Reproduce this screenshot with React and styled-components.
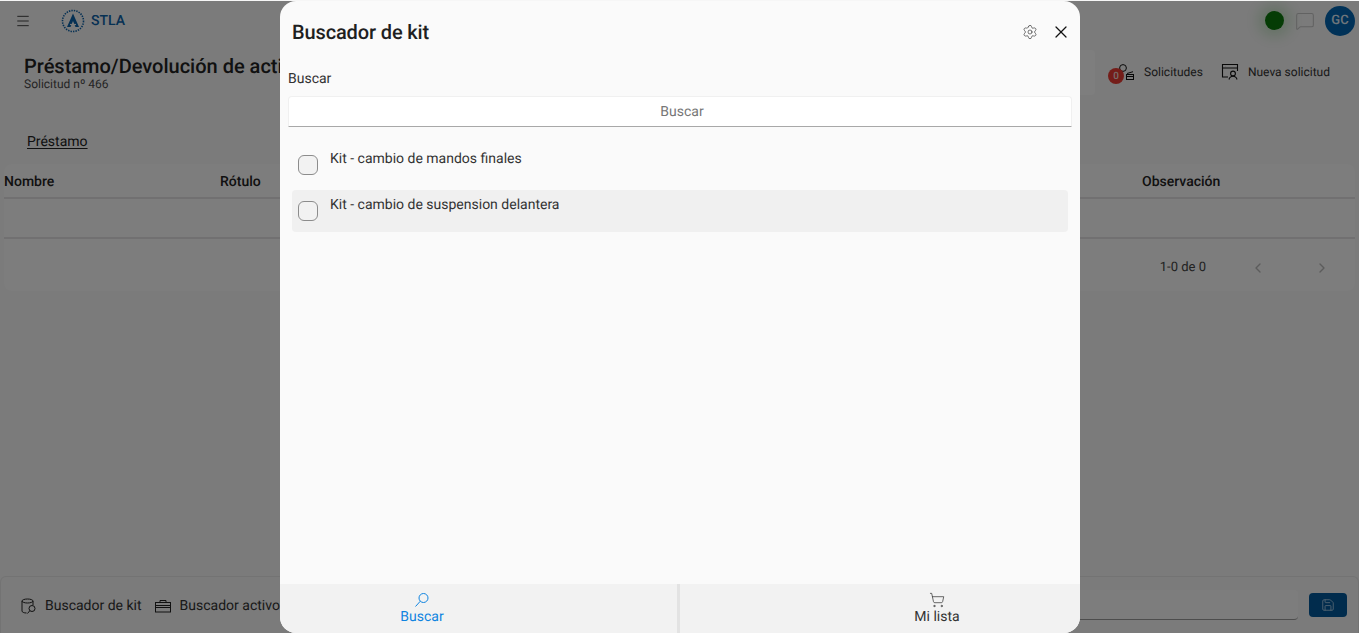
import React from "react";
import styled, { createGlobalStyle } from "styled-components";
import { Settings, X, Menu, ChevronLeft, ChevronRight, ShoppingCart, Save, MessageSquare } from "lucide-react";

const Global = createGlobalStyle`
  html, body { margin: 0; padding: 0; height: 100%; overflow: hidden; }
  body { font-family: Roboto, "Liberation Sans", sans-serif; background: #f6f6f6; color: #222; text-rendering: geometricPrecision; }
  * { box-sizing: border-box; }
`;

const Page = styled.div`
  position: relative;
  width: 1359px;
  height: 633px;
  overflow: hidden;
  display: flex;
  flex-direction: column;
  background: #f6f6f6;
`;

const TopBar = styled.header`
  height: 43px;
  display: flex;
  align-items: center;
  padding: 0 4px 2px 15px;
  flex-shrink: 0;
`;

const Brand = styled.div`
  display: flex;
  align-items: center;
  gap: 6px;
  margin-left: 30px;
  color: #0d62a8;
  font-size: 14px;
  font-weight: 500;
  svg { display: block; }
`;

const TopRight = styled.div`
  margin-left: auto;
  display: flex;
  align-items: center;
  gap: 10px;
`;

const StatusDot = styled.span`
  width: 19px;
  height: 19px;
  margin-right: 1px;
  border-radius: 50%;
  background: #0b780b;
  box-shadow: 0 0 14px 6px rgba(14, 154, 14, 0.2);
`;

const Avatar = styled.span`
  width: 30px;
  height: 30px;
  border-radius: 50%;
  background: #0264b0;
  color: #dfeaf5;
  display: flex;
  align-items: center;
  justify-content: center;
  font-size: 13px;
  font-weight: 500;
`;

const TitleRow = styled.div`
  height: 55px;
  display: flex;
  align-items: flex-start;
  padding: 11px 29px 0 24px;
  flex-shrink: 0;
`;

const TitleBlock = styled.div`
  display: flex;
  flex-direction: column;
  white-space: nowrap;
`;

const PageTitle = styled.h1`
  margin: 0;
  font-size: 20px;
  line-height: 24px;
  font-weight: 500;
  color: #222;
`;

const PageSub = styled.span`
  font-size: 12px;
  line-height: 12px;
  color: #4a4a4a;
`;

const Actions = styled.div`
  margin-left: auto;
  display: flex;
  align-items: center;
  height: 36px;
`;

const ActionItem = styled.div`
  position: relative;
  display: flex;
  align-items: center;
  gap: ${(p) => p.$gap || 10}px;
  font-size: 12px;
  color: #333;
  margin-left: ${(p) => p.$left || 0}px;
`;

const Badge = styled.span`
  position: absolute;
  left: -9px;
  top: 5px;
  width: 16px;
  height: 16px;
  border-radius: 50%;
  background: #e83b32;
  color: #f0d8d6;
  font-size: 10px;
  font-weight: 500;
  display: flex;
  align-items: center;
  justify-content: center;
`;

const Tabs = styled.div`
  height: 66px;
  flex-shrink: 0;
  padding: 33px 0 0 27px;
`;

const TabLabel = styled.span`
  font-size: 14px;
  line-height: 20px;
  color: #222;
  text-decoration: underline;
  text-underline-offset: 2px;
`;

const TableCard = styled.section`
  margin: 0 4px 0 4px;
  background: #fafafa;
  border-radius: 8px;
  height: 127px;
  display: flex;
  flex-direction: column;
`;

const TableHead = styled.div`
  height: 35px;
  padding-top: 2px;
  display: grid;
  grid-template-columns: 216px 922px 1fr;
  align-items: center;
  font-size: 14px;
  font-weight: 500;
  color: #222;
  border-bottom: 2px solid #e2e0e2;
`;

const TableEmpty = styled.div`
  height: 40px;
  border-bottom: 2px solid #e2e0e2;
`;

const Pager = styled.div`
  flex: 1;
  display: flex;
  align-items: center;
  justify-content: flex-end;
  font-size: 13px;
  color: #444;
  padding: 5px 25px 0 0;
  svg { color: #b9b9b9; }
`;

const PagerCount = styled.span`
  margin-right: 44px;
`;

const PagerGap = styled.span`
  width: 48px;
`;

const Spacer = styled.div`
  flex: 1;
`;

const BottomBar = styled.footer`
  height: 57px;
  flex-shrink: 0;
  border: 1px solid #e6e6e6;
  border-bottom: 0;
  border-radius: 6px 6px 0 0;
  background: #f6f6f6;
  display: flex;
  align-items: center;
  padding: 0 11px 0 20px;
  font-size: 14px;
  color: #333;
`;

const BottomItem = styled.div`
  display: flex;
  align-items: center;
  gap: ${(p) => p.$gap || 8}px;
  margin-right: 12px;
  padding-top: 2px;
  white-space: nowrap;
`;

const NoteField = styled.div`
  margin-left: auto;
  width: 300px;
  height: 30px;
  background: #fbfbfb;
  border-bottom: 1px solid #9a9a9a;
  border-radius: 4px;
`;

const SaveButton = styled.button`
  width: 38px;
  height: 24px;
  margin-left: 11px;
  border: 0;
  border-radius: 4px;
  background: #02589a;
  color: #a9cbe6;
  display: flex;
  align-items: center;
  justify-content: center;
  padding: 0;
`;

const SearchGhost = styled.div`
  position: absolute;
  left: 1060px;
  top: 50px;
  width: 35px;
  height: 45px;
  background: #fdfdfd;
  border-radius: 4px;
`;

const Backdrop = styled.div`
  position: absolute;
  inset: 1px 0 0 0;
  background: rgba(0, 0, 0, 0.5);
`;

const Modal = styled.div`
  position: absolute;
  left: 280px;
  top: 1px;
  width: 800px;
  height: 632px;
  background: #fafafa;
  border-radius: 16px;
  overflow: hidden;
  display: flex;
  flex-direction: column;
`;

const ModalHeader = styled.div`
  height: 61px;
  flex-shrink: 0;
  display: flex;
  align-items: center;
  padding: 0 9px 0 12px;
`;

const ModalTitle = styled.h2`
  margin: 0;
  font-size: 20px;
  font-weight: 500;
  letter-spacing: -0.13px;
  color: #1f1f1f;
`;

const HeaderIcons = styled.div`
  margin-left: auto;
  display: flex;
  align-items: center;
  gap: 13px;
  svg { display: block; }
`;

const ModalBody = styled.div`
  flex: 1;
  padding: 9px 8px 0 8px;
  display: flex;
  flex-direction: column;
`;

const FieldLabel = styled.label`
  font-size: 14px;
  line-height: 16px;
  color: #333;
`;

const SearchInput = styled.input`
  width: 784px;
  height: 31px;
  margin-top: 9px;
  padding: 0 0 0 4px;
  border: 1px solid #f0f0f0;
  border-bottom: 1px solid #a8a8a8;
  border-radius: 4px 4px 0 0;
  background: #fff;
  font: 400 14px Roboto, sans-serif;
  text-rendering: geometricPrecision;
  text-align: center;
  outline: 0;
  &::placeholder { color: #777; opacity: 1; }
`;

const KitList = styled.div`
  margin: 17px 4px 0 4px;
  display: flex;
  flex-direction: column;
  gap: 4px;
`;

const KitRow = styled.div`
  height: 42px;
  display: flex;
  align-items: flex-start;
  gap: 12px;
  padding: 0 6px;
  border-radius: 4px;
  background: ${(p) => (p.$shade ? "#f0f0f0" : "transparent")};
`;

const KitCheck = styled.span`
  width: 20px;
  height: 20px;
  margin-top: 11px;
  border: 1px solid #8c8c8c;
  border-radius: 6px;
  background: #f2f2f2;
  flex-shrink: 0;
`;

const KitText = styled.span`
  font-size: 14px;
  line-height: 20px;
  margin-top: 5px;
  color: #333;
`;

const ModalTabs = styled.div`
  height: 49px;
  flex-shrink: 0;
  display: grid;
  grid-template-columns: 397px 3px 1fr;
  background: #f2f2f2;
`;

const ModalTab = styled.button`
  border: 0;
  background: transparent;
  padding: 8px ${(p) => (p.$active ? "113px" : "0")} 0 ${(p) => (p.$active ? "0" : "114px")};
  display: flex;
  flex-direction: column;
  align-items: center;
  font: 400 14px/16px Roboto, sans-serif;
  text-rendering: geometricPrecision;
  color: ${(p) => (p.$active ? "#0f84e0" : "#333")};
  svg { display: block; margin-bottom: 1px; }
`;

const TabDivider = styled.span`
  background: #e3e3e3;
`;

const Logo = () => (
  <svg width="24" height="24" viewBox="0 0 24 24" fill="none">
    <circle cx="12" cy="12" r="10.5" stroke="#0d62a8" strokeWidth="1.6" strokeDasharray="1.4 1.1" />
    <path d="M12 4.5 L18 18 H14.5 L12 12 L9.5 18 H6 Z" fill="#0d62a8" />
    <path d="M9 15.5 H15" stroke="#f6f6f6" strokeWidth="1.2" />
  </svg>
);

const RequestsIcon = () => (
  <svg width="18" height="18" viewBox="0 0 18 18" fill="none" stroke="#111" strokeWidth="1">
    <circle cx="6" cy="5" r="3.4" />
    <rect x="9.500" y="11.500" width="7" height="5" />
    <path d="M9.500 13.500h7M10 10.500l6-1.800" />
  </svg>
);

const NewRequestIcon = () => (
  <svg width="18" height="18" viewBox="0 0 18 18" fill="none" stroke="#111" strokeWidth="1.1">
    <path d="M7 14H1.500V1.500h15V8" />
    <path d="M1.500 5h15M4 3.200h.1" />
    <circle cx="12" cy="10.500" r="2.400" />
    <path d="M8 16.500c.5-2 2-3.200 4-3.200s3.500 1.200 4 3.200" />
  </svg>
);

const KitIcon = () => (
  <svg width="16" height="17" viewBox="0 0 16 17" fill="none" stroke="#222" strokeWidth="1">
    <ellipse cx="6.500" cy="3" rx="5.500" ry="2" />
    <path d="M1 3v10c0 1.200 2 2 4.500 2M12 3v4" />
    <circle cx="11" cy="10.500" r="3" />
    <path d="M8.800 12.700L6.500 15.500" />
  </svg>
);

const CaseIcon = () => (
  <svg width="18" height="14" viewBox="0 0 18 14" fill="none" stroke="#222" strokeWidth="1">
    <rect x="1.500" y="3.500" width="15" height="9.500" />
    <path d="M6 3.500V1.500h6v2M1.500 6.500h15M1.500 8.500h15" />
  </svg>
);

const FindIcon = () => (
  <svg width="16" height="16" viewBox="0 0 16 16" fill="none" stroke="currentColor" strokeWidth="1">
    <circle cx="9.500" cy="6" r="4.500" />
    <path d="M6.300 9.200L1.500 14.500" />
  </svg>
);

export default function App() {
  return (
    <Page>
      <Global />
      <TopBar>
        <Menu size={16} color="#222" strokeWidth={1.25} />
        <Brand>
          <Logo />
          <span>STLA</span>
        </Brand>
        <TopRight>
          <StatusDot />
          <MessageSquare size={20} color="#c4c4c4" strokeWidth={1.25} />
          <Avatar>GC</Avatar>
        </TopRight>
      </TopBar>
      <TitleRow>
        <TitleBlock>
          <PageTitle>Préstamo/Devolución de activos</PageTitle>
          <PageSub>Solicitud nº 466</PageSub>
        </TitleBlock>
        <Actions>
          <ActionItem $gap={9}>
            <Badge>0</Badge>
            <RequestsIcon />
            <span>Solicitudes</span>
          </ActionItem>
          <ActionItem $left={18} $gap={9}>
            <NewRequestIcon />
            <span>Nueva solicitud</span>
          </ActionItem>
        </Actions>
      </TitleRow>
      <Tabs>
        <TabLabel>Préstamo</TabLabel>
      </Tabs>
      <TableCard>
        <TableHead>
          <span>Nombre</span>
          <span>Rótulo</span>
          <span>Observación</span>
        </TableHead>
        <TableEmpty />
        <Pager>
          <PagerCount>1-0 de 0</PagerCount>
          <ChevronLeft size={16} />
          <PagerGap />
          <ChevronRight size={16} />
        </Pager>
      </TableCard>
      <Spacer />
      <BottomBar>
        <BottomItem>
          <KitIcon />
          <span>Buscador de kit</span>
        </BottomItem>
        <BottomItem $gap={8}>
          <CaseIcon />
          <span>Buscador activos</span>
        </BottomItem>
        <NoteField />
        <SaveButton aria-label="Guardar">
          <Save size={14} strokeWidth={1.5} />
        </SaveButton>
      </BottomBar>
      <SearchGhost />
      <Backdrop />
      <Modal>
        <ModalHeader>
          <ModalTitle>Buscador de kit</ModalTitle>
          <HeaderIcons>
            <Settings size={16} color="#333" strokeWidth={1} />
            <X size={20} color="#111" strokeWidth={1.5} />
          </HeaderIcons>
        </ModalHeader>
        <ModalBody>
          <FieldLabel>Buscar</FieldLabel>
          <SearchInput placeholder="Buscar" />
          <KitList>
            <KitRow>
              <KitCheck />
              <KitText>Kit - cambio de mandos finales</KitText>
            </KitRow>
            <KitRow $shade>
              <KitCheck />
              <KitText>Kit - cambio de suspension delantera</KitText>
            </KitRow>
          </KitList>
        </ModalBody>
        <ModalTabs>
          <ModalTab $active>
            <FindIcon />
            Buscar
          </ModalTab>
          <TabDivider />
          <ModalTab>
            <ShoppingCart size={16} strokeWidth={1.1} />
            Mi lista
          </ModalTab>
        </ModalTabs>
      </Modal>
    </Page>
  );
}
